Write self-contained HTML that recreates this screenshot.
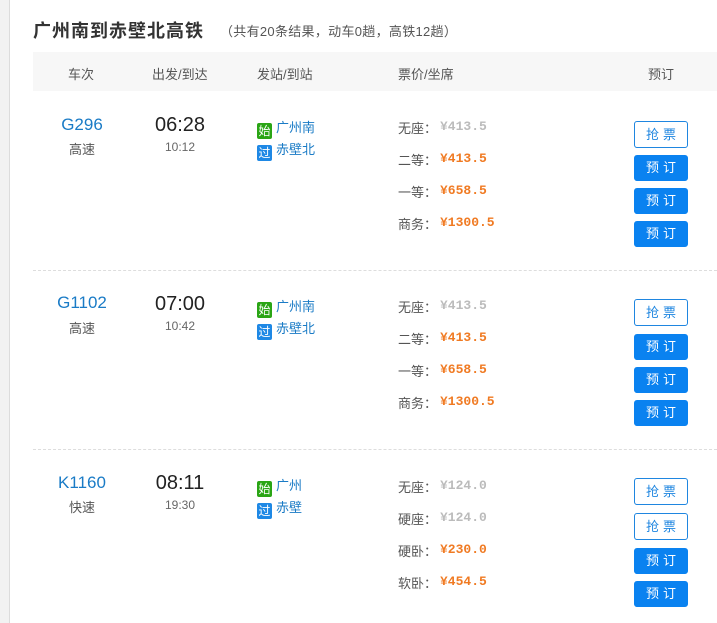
<!DOCTYPE html>
<html><head><meta charset="utf-8">
<style>
*{margin:0;padding:0;box-sizing:border-box}
body{width:717px;height:623px;overflow:hidden;background:#fff;font-family:"Liberation Sans","Noto Sans CJK SC",sans-serif;position:relative;color:#333}
.strip{position:absolute;left:0;top:0;width:10px;height:623px;background:#f2f2f2;border-right:1px solid #dcdcdc}
.a{position:absolute;white-space:nowrap}
.title{left:33px;top:17px;font-size:18px;font-weight:bold;color:#333;letter-spacing:1px}
.sub{left:220px;top:21px;font-size:13px;color:#555;letter-spacing:0.3px}
.head{position:absolute;left:33px;top:52px;width:684px;height:39px;background:#f7f7f7}
.th{top:64px;font-size:13px;color:#555}
.code{font-size:17px;color:#1a7bc6;text-align:center;width:100px;left:32px}
.typ{font-size:13px;color:#555;text-align:center;width:100px;left:32px}
.dep{font-size:20px;color:#222;text-align:center;width:80px;left:140px}
.arr{font-size:12px;color:#666;text-align:center;width:80px;left:140px}
.st{left:257px;font-size:13px;color:#1a7bc6}
.tag{display:inline-block;width:15px;height:16px;font-size:12px;line-height:16px;text-align:center;color:#fff;vertical-align:-3px;margin-right:4px;border-radius:2px}
.g{background:#2aa515}.b{background:#1e88e5}
.lab{left:398px;font-size:13px;color:#555}
.pr{left:440px;font-size:13px;font-weight:bold;font-family:"Liberation Mono","Noto Sans CJK SC",monospace}
.gray{color:#bbb}.or{color:#f07a22}
.btn{position:absolute;left:634px;width:54px;height:27px;border-radius:3px;font-size:13px;text-align:center;line-height:27px;letter-spacing:4px;text-indent:4px}
.bo{border:1px solid #1f86e0;color:#1f86e0;background:#fff;line-height:25px}
.bf{background:#0a82f0;color:#fff;height:26px;line-height:26px}
.sep{position:absolute;left:33px;width:684px;border-top:1px dashed #ddd}
</style></head><body>
<div class="strip"></div>
<div class="a title">广州南到赤壁北高铁</div>
<div class="a sub">（共有20条结果，动车0趟，高铁12趟）</div>
<div class="head"></div>
<div class="a th" style="left:68px">车次</div>
<div class="a th" style="left:152px">出发/到达</div>
<div class="a th" style="left:257px">发站/到站</div>
<div class="a th" style="left:398px">票价/坐席</div>
<div class="a th" style="left:648px">预订</div>

<div class="a code" style="top:115px">G296</div>
<div class="a typ" style="top:139px">高速</div>
<div class="a dep" style="top:114px">06:28</div>
<div class="a arr" style="top:140px">10:12</div>
<div class="a st" style="top:117px"><span class="tag g">始</span>广州南</div>
<div class="a st" style="top:139px"><span class="tag b">过</span>赤壁北</div>
<div class="a lab" style="top:118px">无座：</div><div class="a pr gray" style="top:119px">¥413.5</div>
<div class="a lab" style="top:150px">二等：</div><div class="a pr or" style="top:151px">¥413.5</div>
<div class="a lab" style="top:182px">一等：</div><div class="a pr or" style="top:183px">¥658.5</div>
<div class="a lab" style="top:214px">商务：</div><div class="a pr or" style="top:215px">¥1300.5</div>
<div class="btn bo" style="top:121px">抢票</div>
<div class="btn bf" style="top:155px">预订</div>
<div class="btn bf" style="top:188px">预订</div>
<div class="btn bf" style="top:221px">预订</div>
<div class="sep" style="top:270px"></div>

<div class="a code" style="top:293px">G1102</div>
<div class="a typ" style="top:318px">高速</div>
<div class="a dep" style="top:293px">07:00</div>
<div class="a arr" style="top:319px">10:42</div>
<div class="a st" style="top:296px"><span class="tag g">始</span>广州南</div>
<div class="a st" style="top:318px"><span class="tag b">过</span>赤壁北</div>
<div class="a lab" style="top:297px">无座：</div><div class="a pr gray" style="top:298px">¥413.5</div>
<div class="a lab" style="top:329px">二等：</div><div class="a pr or" style="top:330px">¥413.5</div>
<div class="a lab" style="top:361px">一等：</div><div class="a pr or" style="top:362px">¥658.5</div>
<div class="a lab" style="top:393px">商务：</div><div class="a pr or" style="top:394px">¥1300.5</div>
<div class="btn bo" style="top:299px">抢票</div>
<div class="btn bf" style="top:334px">预订</div>
<div class="btn bf" style="top:367px">预订</div>
<div class="btn bf" style="top:400px">预订</div>
<div class="sep" style="top:449px"></div>

<div class="a code" style="top:473px">K1160</div>
<div class="a typ" style="top:497px">快速</div>
<div class="a dep" style="top:472px">08:11</div>
<div class="a arr" style="top:498px">19:30</div>
<div class="a st" style="top:475px"><span class="tag g">始</span>广州</div>
<div class="a st" style="top:497px"><span class="tag b">过</span>赤壁</div>
<div class="a lab" style="top:477px">无座：</div><div class="a pr gray" style="top:478px">¥124.0</div>
<div class="a lab" style="top:509px">硬座：</div><div class="a pr gray" style="top:510px">¥124.0</div>
<div class="a lab" style="top:541px">硬卧：</div><div class="a pr or" style="top:542px">¥230.0</div>
<div class="a lab" style="top:573px">软卧：</div><div class="a pr or" style="top:574px">¥454.5</div>
<div class="btn bo" style="top:478px">抢票</div>
<div class="btn bo" style="top:513px">抢票</div>
<div class="btn bf" style="top:548px">预订</div>
<div class="btn bf" style="top:581px">预订</div>
</body></html>
